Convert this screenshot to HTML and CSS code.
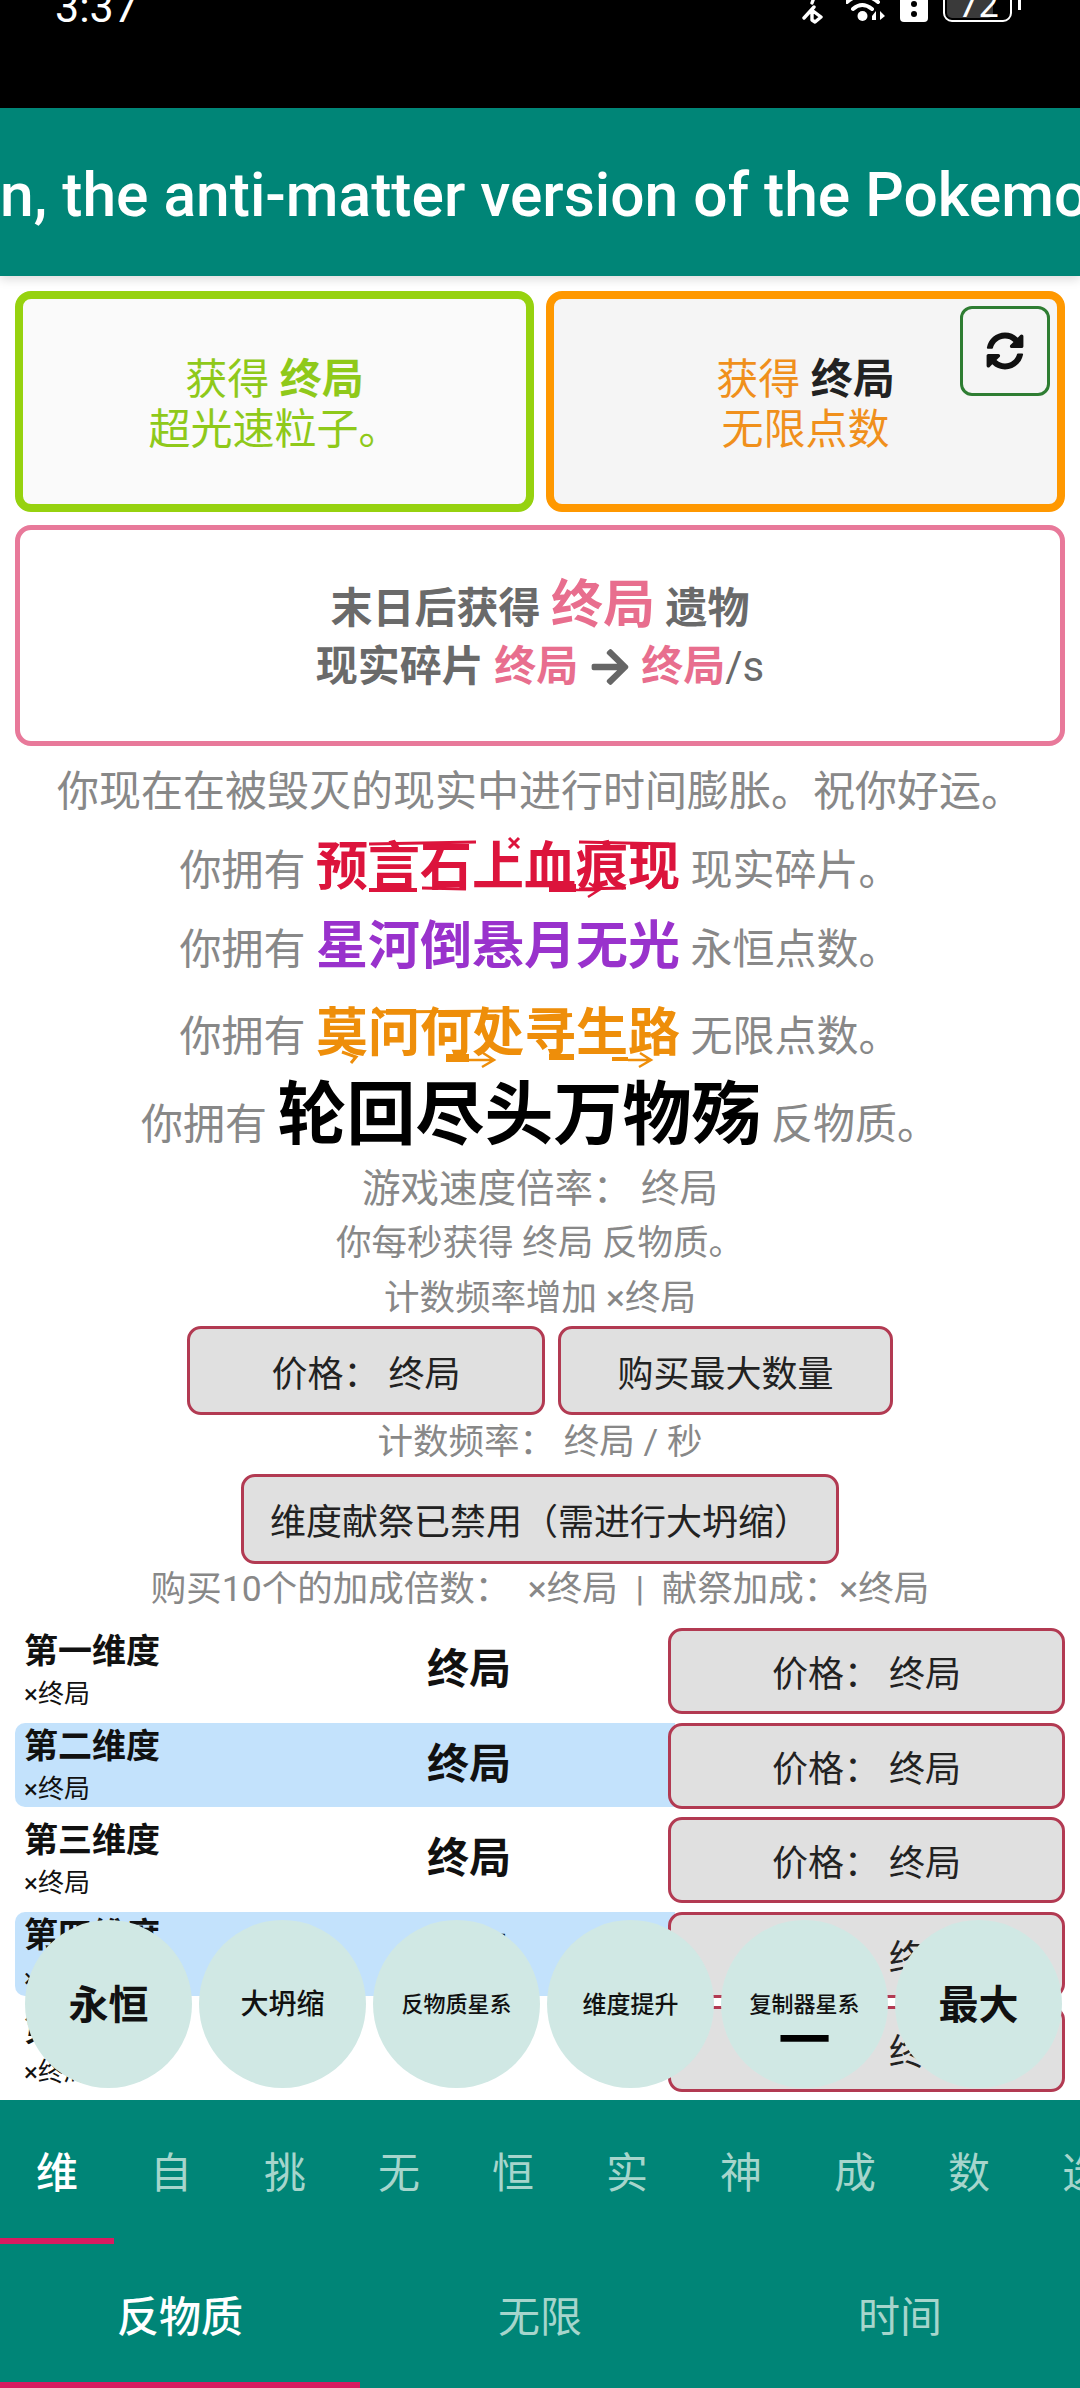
FILE: index.html
```html
<!DOCTYPE html>
<html lang="zh">
<head>
  <meta charset="UTF-8" />
  <meta name="viewport" content="width=device-width, initial-scale=1.0"/>
  <title>反物质维度</title>
  <link rel="stylesheet" href="styles.css">
</head>
<body>
  <div class="app">
    <div class="status-bar">
      <div class="clock">3:37</div>
      <div class="status-icons">
        <svg class="icon-bt" viewBox="0 0 24 24"><path d="M2 18 L12 7 M14 -8 L10 3 M11 11 L19 17 L13 22 L10 20 L10 12" fill="none" stroke="#fff" stroke-width="3.4" stroke-linecap="round" stroke-linejoin="round"/></svg>
        <svg class="icon-wifi" viewBox="0 0 41 24"><path d="M1 2 Q16 -11 32 2 M7 9 Q16 1 26 9" fill="none" stroke="#fff" stroke-width="4" stroke-linecap="round"/><circle cx="16.500" cy="16" r="5" fill="#fff"/><path d="M26 16 L30 11 V20 H26 Z M34 11 L39 16 L34 20 Z" fill="#fff"/></svg>
        <div class="icon-sim"><span class="sim-dot"></span><span class="sim-dot"></span></div>
        <div class="battery"><span class="battery-fill"></span><span class="battery-num">72</span></div>
        <span class="battery-tip"></span>
      </div>
    </div>

    <div class="title-bar">
      <div class="title-text">n, the anti-matter version of the Pokemon game</div>
    </div>

    <div class="main">
      <div class="prestige-row">
        <div class="prestige tachyon">获得 <b>终局</b><br>超光速粒子。</div>
        <div class="prestige infinity">
          获得 <b class="dark">终局</b><br>无限点数
          <div class="sync-btn">
            <svg viewBox="0 0 512 512"><path d="M370.72 133.28C339.458 104.008 298.888 87.962 255.848 88c-77.458.068-144.328 53.178-162.791 126.85-1.344 5.363-6.122 9.15-11.651 9.15H24.103c-7.498 0-13.194-6.807-11.807-14.176C33.933 94.924 134.813 8 256 8c66.448 0 126.791 26.136 171.315 68.685L463.03 40.97C478.149 25.851 504 36.559 504 57.941V192c0 13.255-10.745 24-24 24H345.941c-21.382 0-32.09-25.851-16.971-40.971l41.75-41.749zM32 296h134.059c21.382 0 32.09 25.851 16.971 40.971l-41.75 41.75c31.262 29.273 71.835 45.319 114.876 45.28 77.418-.07 144.315-53.144 162.787-126.849 1.344-5.363 6.122-9.15 11.651-9.15h57.304c7.498 0 13.194 6.807 11.807 14.176C478.067 417.076 377.187 504 256 504c-66.448 0-126.791-26.136-171.315-68.685L48.97 471.03C33.851 486.149 8 475.441 8 454.059V320c0-13.255 10.745-24 24-24z"/></svg>
          </div>
        </div>
      </div>
      <div class="prestige reality">
        <div>末日后获得 <span class="big-pink">终局</span> 遗物</div>
        <div>现实碎片 <span class="pink">终局</span>
          <svg class="arrow" viewBox="0 0 448 512"><path d="M190.5 66.9l22.2-22.2c9.4-9.4 24.6-9.4 33.9 0L441 239c9.4 9.4 9.4 24.6 0 33.9L246.6 467.3c-9.4 9.4-24.6 9.4-33.9 0l-22.2-22.2c-9.5-9.5-9.3-25 .4-34.3L311.4 296H24c-13.3 0-24-10.7-24-24v-32c0-13.3 10.7-24 24-24h287.4L190.9 101.2c-9.8-9.3-10-24.8-.4-34.3z"/></svg>
          <span class="pink">终局</span><span class="per">/s</span></div>
      </div>

      <div class="hint">你现在在被毁灭的现实中进行时间膨胀。祝你好运。</div>
      <div class="amount am-shards">你拥有 <span class="val shards">预言石上血痕现<svg class="glitch" viewBox="0 0 370 100"><path d="M53 26 L160 24 M263 24 L353 26 M193 20 L203 30 M203 20 L193 30 M106 70 L150 71 M263 71 L310 70" stroke-width="3"/><path d="M53 72 H101" stroke-width="4"/><path d="M233 70 H260" stroke-width="8"/><path d="M260 72 H282 M273 65 L283 72 L272 79" stroke-width="2.500"/></svg></span> 现实碎片。</div>
      <div class="amount am-eternity">你拥有 <span class="val eternity">星河倒悬月无光</span> 永恒点数。</div>
      <div class="amount am-inf">你拥有 <span class="val inf">莫问何处寻生路<svg class="glitch" viewBox="0 0 370 100"><path d="M56 28 L203 27" stroke-width="3"/><path d="M26 68 L40 73 L35 79" stroke-width="3"/><path d="M130 74 H153" stroke-width="8"/><path d="M153 76 H176 M167 69 L178 76 L166 83" stroke-width="2.500"/><path d="M213 33 L256 31" stroke-width="4"/><path d="M233 73 H258" stroke-width="6"/><path d="M296 75 H312" stroke-width="4"/><path d="M312 76 H333 M324 69 L335 76 L323 83" stroke-width="2.500"/></svg></span> 无限点数。</div>
      <div class="amount am-anti">你拥有 <span class="anti">轮回尽头万物殇</span> 反物质。</div>

      <div class="rate rate-speed">游戏速度倍率：&nbsp;终局</div>
      <div class="rate">你每秒获得 终局 反物质。</div>
      <div class="rate">计数频率增加 <i class="mul">×</i>终局</div>
      <div class="tick-row">
        <div class="btn btn-tick">价格：&nbsp;终局</div>
        <div class="btn btn-max">购买最大数量</div>
      </div>
      <div class="rate rate-tick">计数频率：&nbsp;终局 / 秒</div>
      <div class="btn btn-sac">维度献祭已禁用（需进行大坍缩）</div>
      <div class="rate rate-mult">购买10个的加成倍数：&nbsp;&nbsp;<i class="mul">×</i>终局&nbsp;&nbsp;|&nbsp;&nbsp;献祭加成：<i class="mul">×</i>终局</div>

      <div class="dims">
        <div class="dim-row">
          <div class="dim-name"><b>第一维度</b><span><i class="mul">×</i>终局</span></div>
          <div class="dim-amount">终局</div>
          <div class="btn btn-dim">价格：&nbsp;终局</div>
        </div>
        <div class="dim-row alt">
          <div class="dim-name"><b>第二维度</b><span><i class="mul">×</i>终局</span></div>
          <div class="dim-amount">终局</div>
          <div class="btn btn-dim">价格：&nbsp;终局</div>
        </div>
        <div class="dim-row">
          <div class="dim-name"><b>第三维度</b><span><i class="mul">×</i>终局</span></div>
          <div class="dim-amount">终局</div>
          <div class="btn btn-dim">价格：&nbsp;终局</div>
        </div>
        <div class="dim-row alt">
          <div class="dim-name"><b>第四维度</b><span><i class="mul">×</i>终局</span></div>
          <div class="dim-amount">终局</div>
          <div class="btn btn-dim">价格：&nbsp;终局</div>
        </div>
        <div class="dim-row">
          <div class="dim-name"><b>第五维度</b><span><i class="mul">×</i>终局</span></div>
          <div class="dim-amount">终局</div>
          <div class="btn btn-dim">价格：&nbsp;终局</div>
        </div>
      </div>

      <div class="fabs">
        <div class="fab fs-42">永恒</div>
        <div class="fab fs-28">大坍缩</div>
        <div class="fab fs-22">反物质星系</div>
        <div class="fab fs-24">维度提升</div>
        <div class="fab fs-22">复制器星系<span class="fab-dash">一</span></div>
        <div class="fab fs-42">最大</div>
      </div>
    </div>

    <div class="tabs tabs-top">
      <div class="tab on">维</div>
      <div class="tab">自</div>
      <div class="tab">挑</div>
      <div class="tab">无</div>
      <div class="tab">恒</div>
      <div class="tab">实</div>
      <div class="tab">神</div>
      <div class="tab">成</div>
      <div class="tab">数</div>
      <div class="tab">选</div>
    </div>
    <div class="tabs tabs-bottom">
      <div class="tab on">反物质</div>
      <div class="tab">无限</div>
      <div class="tab">时间</div>
    </div>
  </div>
</body>
</html>
```
FILE: styles.css
```css
body {
  margin: 0;
  font-family: Roboto, "Noto Sans CJK SC", sans-serif;
  background: #fff;
}
.app {
  width: 1080px;
  height: 2388px;
  display: flex;
  flex-direction: column;
  overflow: hidden;
}

/* status bar */
.status-bar {
  height: 108px;
  flex: none;
  background: #000;
  color: #fff;
  display: flex;
  justify-content: space-between;
  overflow: hidden;
}
.clock {
  font-size: 43px;
  line-height: 44px;
  margin: -15px 0 0 55px;
}
.status-icons {
  display: flex;
  align-items: flex-start;
  margin-right: 59px;
}
.icon-bt {
  width: 24px;
  height: 24px;
  margin-right: 20px;
}
.icon-wifi {
  width: 41px;
  height: 24px;
  margin-right: 13px;
}
.icon-sim {
  width: 28px;
  height: 34px;
  margin-top: -12px;
  margin-right: 15px;
  background: #fff;
  border-radius: 4px;
  display: flex;
  flex-direction: column;
  align-items: center;
  justify-content: flex-end;
  gap: 4px;
  padding-bottom: 5px;
  box-sizing: border-box;
}
.sim-dot {
  width: 6px;
  height: 6px;
  border-radius: 50%;
  background: #000;
}
.battery {
  position: relative;
  width: 69px;
  height: 42px;
  margin-top: -20px;
  border: 2px solid #fff;
  border-radius: 9px;
  box-sizing: border-box;
  overflow: hidden;
}
.battery-fill {
  position: absolute;
  left: 2px;
  top: 0;
  bottom: 2px;
  width: 46px;
  background: #3a3a3a;
  border-radius: 5px;
}
.battery-num {
  position: relative;
  display: block;
  text-align: center;
  font-size: 36px;
  line-height: 36px;
  margin: 5px 0 0 2px;
}
.battery-tip {
  width: 3px;
  height: 10px;
  background: #fff;
  margin-left: 6px;
}

/* title */
.title-bar {
  height: 168px;
  flex: none;
  box-sizing: border-box;
  padding-top: 6px;
  background: #008577;
  display: flex;
  align-items: center;
  overflow: hidden;
  box-shadow: 0 3px 10px rgba(0,0,0,0.15);
  position: relative;
}
.title-text {
  color: #fff;
  font-size: 60.5px;
  font-weight: 500;
  white-space: nowrap;
}

/* main */
.main {
  flex: 1;
  min-height: 0;
  position: relative;
  text-align: center;
  color: #888;
  padding: 15px 15px 0;
  font-size: 42px;
}
.prestige-row {
  display: flex;
  gap: 12px;
}
.prestige {
  height: 221px;
  box-sizing: border-box;
  border-radius: 16px;
  display: flex;
  flex-direction: column;
  justify-content: center;
  line-height: 50px;
  position: relative;
}
.prestige-row .prestige {
  flex: 1;
  display: block;
  padding-top: 56px;
}
.tachyon {
  border: 8px solid #96d20f;
  background: #fafafa;
  color: #8fc91a;
}
.infinity {
  border: 8px solid #ff9800;
  background: #f5f5f5;
  color: #f0901c;
}
.tachyon b, .infinity b {
  font-weight: 700;
}
.dark {
  color: #222;
}
.sync-btn {
  position: absolute;
  right: 7px;
  top: 7px;
  width: 90px;
  height: 90px;
  box-sizing: border-box;
  border: 3px solid #2e7d32;
  border-radius: 12px;
  display: flex;
  align-items: center;
  justify-content: center;
}
.sync-btn svg {
  width: 38px;
  height: 38px;
  fill: #111;
}
.reality {
  margin-top: 13px;
  padding-top: 2px;
  border: 5px solid #e8799a;
  background: #fff;
  color: #6a6a6a;
  font-weight: 700;
  line-height: 58px;
}
.big-pink {
  color: #e86e8e;
  font-size: 52px;
}
.pink {
  color: #e86e8e;
}
.per {
  font-weight: 400;
}
.arrow {
  width: 42px;
  height: 42px;
  fill: #666;
  vertical-align: -7px;
}
.hint {
  margin-top: 23px;
  line-height: 46px;
}
.amount {
  line-height: 76px;
  white-space: nowrap;
}
.am-shards { margin-top: 15px; }
.am-inf { line-height: 92px; }
.am-anti { line-height: 65px; }
.val {
  position: relative;
  font-size: 52px;
  font-weight: 700;
}
.glitch {
  position: absolute;
  left: 0;
  top: 50%;
  width: 370px;
  height: 100px;
  margin-top: -50px;
  fill: none;
}
.shards { color: #dc143c; }
.shards .glitch { stroke: #dc143c; }
.eternity { color: #9932cc; }
.inf { color: #ee8e0a; }
.inf .glitch { stroke: #ee8e0a; }
.anti {
  font-size: 69px;
  font-weight: 700;
  color: #000;
}
.rate {
  font-size: 35.5px;
  line-height: 55px;
}
.rate-speed {
  font-size: 38.5px;
  margin-top: 4px;
}
.rate-mult {
  line-height: 50px;
  margin-bottom: 14px;
}
.mul {
  font-style: normal;
  font-family: Roboto, sans-serif;
}

/* buttons */
.btn {
  box-sizing: border-box;
  background: #e0e0e0;
  border: 3px solid #b23a52;
  border-radius: 14px;
  color: #222;
  font-size: 36px;
  display: flex;
  align-items: center;
  justify-content: center;
  white-space: nowrap;
}
.tick-row {
  display: flex;
  justify-content: center;
  gap: 13px;
}
.btn-tick { width: 358px; height: 89px; }
.btn-max { width: 335px; height: 89px; }
.btn-sac {
  width: 598px;
  height: 90px;
  margin: 4px auto 0;
}

/* dimension rows */
.dim-row {
  display: grid;
  grid-template-columns: 255px 1fr 397px;
  height: 84.5px;
  margin-bottom: 10px;
  border-radius: 10px;
}
.dim-row.alt {
  background: linear-gradient(#c3e2fc, #c3e2fc) no-repeat;
  background-size: 660px 100%;
}
.dim-name {
  text-align: left;
  padding-left: 9px;
  color: #111;
}
.dim-name b {
  display: block;
  font-size: 34px;
  line-height: 46px;
}
.dim-name span {
  display: block;
  font-size: 26px;
  line-height: 40px;
}
.dim-amount {
  font-weight: 700;
  color: #111;
  line-height: 84px;
}

/* floating round buttons */
.fabs {
  position: absolute;
  left: 25px;
  top: 1644px;
  display: flex;
  gap: 7px;
}
.fab {
  position: relative;
  width: 167px;
  height: 168px;
  box-sizing: border-box;
  padding-bottom: 4px;
  border-radius: 50%;
  background: #d0e8e4;
  color: #111;
  font-weight: 500;
  display: flex;
  align-items: center;
  justify-content: center;
  white-space: nowrap;
}
.fs-42 { font-size: 40px; font-weight: 700; }
.fs-28 { font-size: 28px; }
.fs-24 { font-size: 24px; }
.fs-22 { font-size: 22px; }
.fab-dash {
  position: absolute;
  left: 0;
  right: 0;
  top: 82px;
  line-height: 80px;
  font-size: 52px;
  font-weight: 700;
  text-align: center;
  color: #000;
}

/* tabs */
.tabs {
  height: 144px;
  flex: none;
  background: #008577;
  display: flex;
  color: #a6d5cc;
  font-size: 42px;
  overflow: hidden;
}
.tab {
  flex: none;
  box-sizing: border-box;
  text-align: center;
  line-height: 148px;
}
.tabs-top .tab { width: 114px; }
.tabs-bottom .tab { width: 360px; }
.tab.on {
  color: #fff;
  font-weight: 500;
  border-bottom: 6px solid #d81b60;
}
```
